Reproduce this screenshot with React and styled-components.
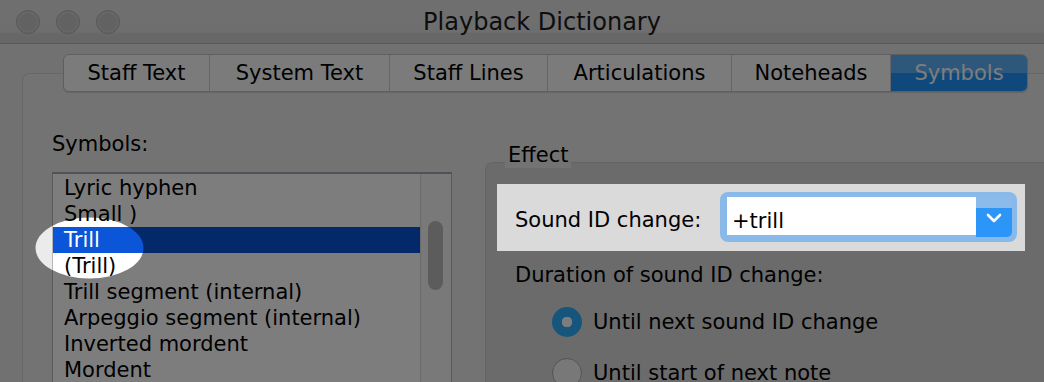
import styled, { createGlobalStyle } from "styled-components";

const GlobalStyle = createGlobalStyle`
    html, body {
        margin: 0;
        padding: 0;
        background: #e7e7e7;
    }
    body {
        font-family: "DejaVu Sans", "Liberation Sans", sans-serif;
        color: #000;
    }
`;

const tabs = [
    { label: "Staff Text", width: 146 },
    { label: "System Text", width: 180 },
    { label: "Staff Lines", width: 158 },
    { label: "Articulations", width: 184 },
    { label: "Noteheads", width: 159 },
    { label: "Symbols", width: 136, active: true },
];

const symbols = [
    "Lyric hyphen",
    "Small )",
    "Trill",
    "(Trill)",
    "Trill segment (internal)",
    "Arpeggio segment (internal)",
    "Inverted mordent",
    "Mordent",
];

const App = () => {
    return (
        <Window>
            <GlobalStyle />
            <TitleBar>
                <Lights>
                    <Light />
                    <Light />
                    <Light />
                </Lights>
                <Title>Playback Dictionary</Title>
            </TitleBar>

            <Body>
                <TabBar>
                    {tabs.map((t) => (
                        <Tab key={t.label} $width={t.width} $active={t.active}>
                            {t.label}
                        </Tab>
                    ))}
                </TabBar>

                <Panel>
                    <LeftCol>
                        <FieldLabel>Symbols:</FieldLabel>
                        <ListBox>
                            <Rows>
                                {symbols.map((s) => (
                                    <Row key={s} $selected={s === "Trill"}>
                                        {s}
                                    </Row>
                                ))}
                            </Rows>
                            <ScrollTrack>
                                <Thumb />
                            </ScrollTrack>
                        </ListBox>
                    </LeftCol>

                    <RightCol>
                        <GroupTitle>Effect</GroupTitle>
                        <GroupBox>
                            <FormRow>
                                <RowLabel>Sound ID change:</RowLabel>
                                <Combo>
                                    <ComboField>+trill</ComboField>
                                    <ComboButton>
                                        <svg width="16" height="10" viewBox="0 0 16 10">
                                            <polyline
                                                points="2,2 8,8 14,2"
                                                fill="none"
                                                stroke="#fff"
                                                strokeWidth="2.6"
                                                strokeLinecap="round"
                                                strokeLinejoin="round"
                                            />
                                        </svg>
                                    </ComboButton>
                                </Combo>
                            </FormRow>

                            <DurationLabel>Duration of sound ID change:</DurationLabel>

                            <RadioList>
                                <RadioRow>
                                    <Radio $checked />
                                    <span>Until next sound ID change</span>
                                </RadioRow>
                                <RadioRow>
                                    <Radio />
                                    <span>Until start of next note</span>
                                </RadioRow>
                            </RadioList>
                        </GroupBox>
                    </RightCol>
                </Panel>
            </Body>

            {/* dimmed page with two spotlight holes */}
            <Spotlight width="1044" height="382" viewBox="0 0 1044 382">
                <defs>
                    <mask id="holes">
                        <rect x="0" y="0" width="1044" height="382" fill="#fff" />
                        <ellipse cx="89.5" cy="248" rx="54" ry="30.5" fill="#000" />
                        <rect x="497" y="184" width="528" height="67" fill="#000" />
                    </mask>
                </defs>
                <rect
                    x="0"
                    y="0"
                    width="1044"
                    height="382"
                    fill="rgba(0,0,0,0.51)"
                    mask="url(#holes)"
                />
            </Spotlight>
        </Window>
    );
};

export default App;

const Window = styled.div`
    position: relative;
    width: 1044px;
    height: 382px;
    overflow: hidden;
    background: #e7e7e7;
    display: flex;
    flex-direction: column;
`;

const TitleBar = styled.div`
    height: 43px;
    flex-shrink: 0;
    display: grid;
    grid-template-columns: 1fr auto 1fr;
    align-items: center;
    background: linear-gradient(#e3e3e3 0, #e1e1e1 32px, #d4d4d4 33px, #d2d2d2 100%);
    border-bottom: 1px solid #b4b4b4;
`;

const Lights = styled.div`
    display: flex;
    gap: 16px;
    padding-left: 16px;
    margin-top: 1px;
`;

const Light = styled.div`
    width: 22px;
    height: 22px;
    border-radius: 50%;
    background: #c9c9c9;
    border: 1px solid #b3b3b3;
    box-shadow: inset 0 0 0 2px #d2d2d2;
`;

const Title = styled.div`
    font-size: 24px;
    color: #1c1c1c;
    padding-top: 1px;
    margin-left: 40px;
`;

const Body = styled.div`
    flex: 1;
    display: flex;
    flex-direction: column;
    padding: 10px 0 0 22px;
`;

const TabBar = styled.div`
    position: relative;
    z-index: 1;
    align-self: flex-start;
    margin-left: 41px;
    height: 36px;
    display: flex;
    background: #fbfbfb;
    border: 1px solid #c2c2c2;
    border-radius: 6px;
    overflow: hidden;
    box-shadow: 0 1px 1px rgba(0, 0, 0, 0.12);
`;

const Tab = styled.div`
    width: ${(p) => p.$width}px;
    box-sizing: border-box;
    display: flex;
    align-items: center;
    justify-content: center;
    font-size: 21px;
    padding-bottom: 1px;
    color: ${(p) => (p.$active ? "#fff" : "#000")};
    background: ${(p) =>
        p.$active
            ? "linear-gradient(#5fb3fb 0, #5fb3fb 50%, #2095fd 50%, #2095fd 100%)"
            : "transparent"};
    border-right: ${(p) => (p.$active ? "none" : "1px solid #cfcfcf")};
`;

const Panel = styled.div`
    flex: 1;
    margin-top: -19px;
    width: 1060px;
    box-sizing: border-box;
    padding: 57px 0 0 29px;
    display: flex;
    gap: 33px;
    background: #ebebeb;
    border: 1px solid #d2d2d2;
    border-right: none;
    border-bottom: none;
    border-radius: 8px 0 0 0;
`;

const LeftCol = styled.div`
    width: 400px;
    flex-shrink: 0;
    display: flex;
    flex-direction: column;
`;

const FieldLabel = styled.div`
    font-size: 21px;
    line-height: 26px;
    white-space: nowrap;
`;

const ListBox = styled.div`
    flex: 1;
    margin-top: 15px;
    display: flex;
    background: #fff;
    border: 1px solid #b7b7b7;
    border-top: 2px solid #a2a8b0;
    border-bottom: none;
`;

const Rows = styled.div`
    flex: 1;
    padding-top: 1px;
`;

const Row = styled.div`
    height: 26px;
    line-height: 26px;
    font-size: 21px;
    padding-left: 11px;
    white-space: nowrap;
    color: ${(p) => (p.$selected ? "#fff" : "#000")};
    background: ${(p) => (p.$selected ? "#0a55d8" : "transparent")};
`;

const ScrollTrack = styled.div`
    width: 30px;
    background: #f6f6f6;
    border-left: 1px solid #dadada;
`;

const Thumb = styled.div`
    width: 15px;
    height: 69px;
    margin: 47px 0 0 7px;
    border-radius: 8px;
    background: #bcbcbc;
`;

const RightCol = styled.div`
    flex: 1;
    min-width: 0;
    display: flex;
    flex-direction: column;
    padding-top: 11px;
`;

const GroupTitle = styled.div`
    position: relative;
    z-index: 1;
    align-self: flex-start;
    margin: 0 0 -6px 20px;
    padding: 0 3px;
    font-size: 21px;
    line-height: 26px;
    background: #ebebeb;
`;

const GroupBox = styled.div`
    width: 620px;
    flex: 1;
    flex-shrink: 0;
    box-sizing: border-box;
    padding: 29px 0 0 29px;
    background: #dadada;
    border: 1px solid #cdcdcd;
    border-right: none;
    border-bottom: none;
    border-radius: 8px 0 0 0;
`;

const FormRow = styled.div`
    display: grid;
    grid-template-columns: 205px 297px;
    align-items: center;
`;

const RowLabel = styled(FieldLabel)`
    padding-top: 5px;
`;

const Combo = styled.div`
    height: 50px;
    box-sizing: border-box;
    padding: 4px 5px 5px 7px;
    display: flex;
    background: #89b9e9;
    border-radius: 8px;
`;

const ComboField = styled.div`
    flex: 1;
    margin-top: 1px;
    background: #fff;
    font-size: 21px;
    line-height: 38px;
    padding-left: 5px;
    padding-top: 5px;
    box-sizing: border-box;
    height: 38px;
`;

const ComboButton = styled.div`
    width: 36px;
    height: 41px;
    display: flex;
    align-items: center;
    justify-content: center;
    padding-top: 2px;
    box-sizing: border-box;
    border-radius: 0 5px 5px 0;
    background: linear-gradient(#8abbeb 0, #8abbeb 12px, #2b96f8 12px, #2b96f8 100%);
`;

const DurationLabel = styled(FieldLabel)`
    margin-top: 20px;
`;

const RadioList = styled.div`
    margin-top: 19px;
    padding-left: 37px;
    display: flex;
    flex-direction: column;
    gap: 21px;
`;

const RadioRow = styled.div`
    display: flex;
    align-items: center;
    gap: 11px;
    height: 30px;
    font-size: 21px;
    white-space: nowrap;
`;

const Radio = styled.div`
    width: 30px;
    height: 30px;
    box-sizing: border-box;
    border-radius: 50%;
    flex-shrink: 0;
    background: ${(p) =>
        p.$checked
            ? "radial-gradient(circle, #fff 0, #fff 5px, #2db0ff 5.5px)"
            : "#f4f4f4"};
    border: ${(p) => (p.$checked ? "none" : "1px solid #aaaaaa")};
`;

const Spotlight = styled.svg`
    position: absolute;
    left: 0;
    top: 0;
    z-index: 10;
    pointer-events: none;
`;
